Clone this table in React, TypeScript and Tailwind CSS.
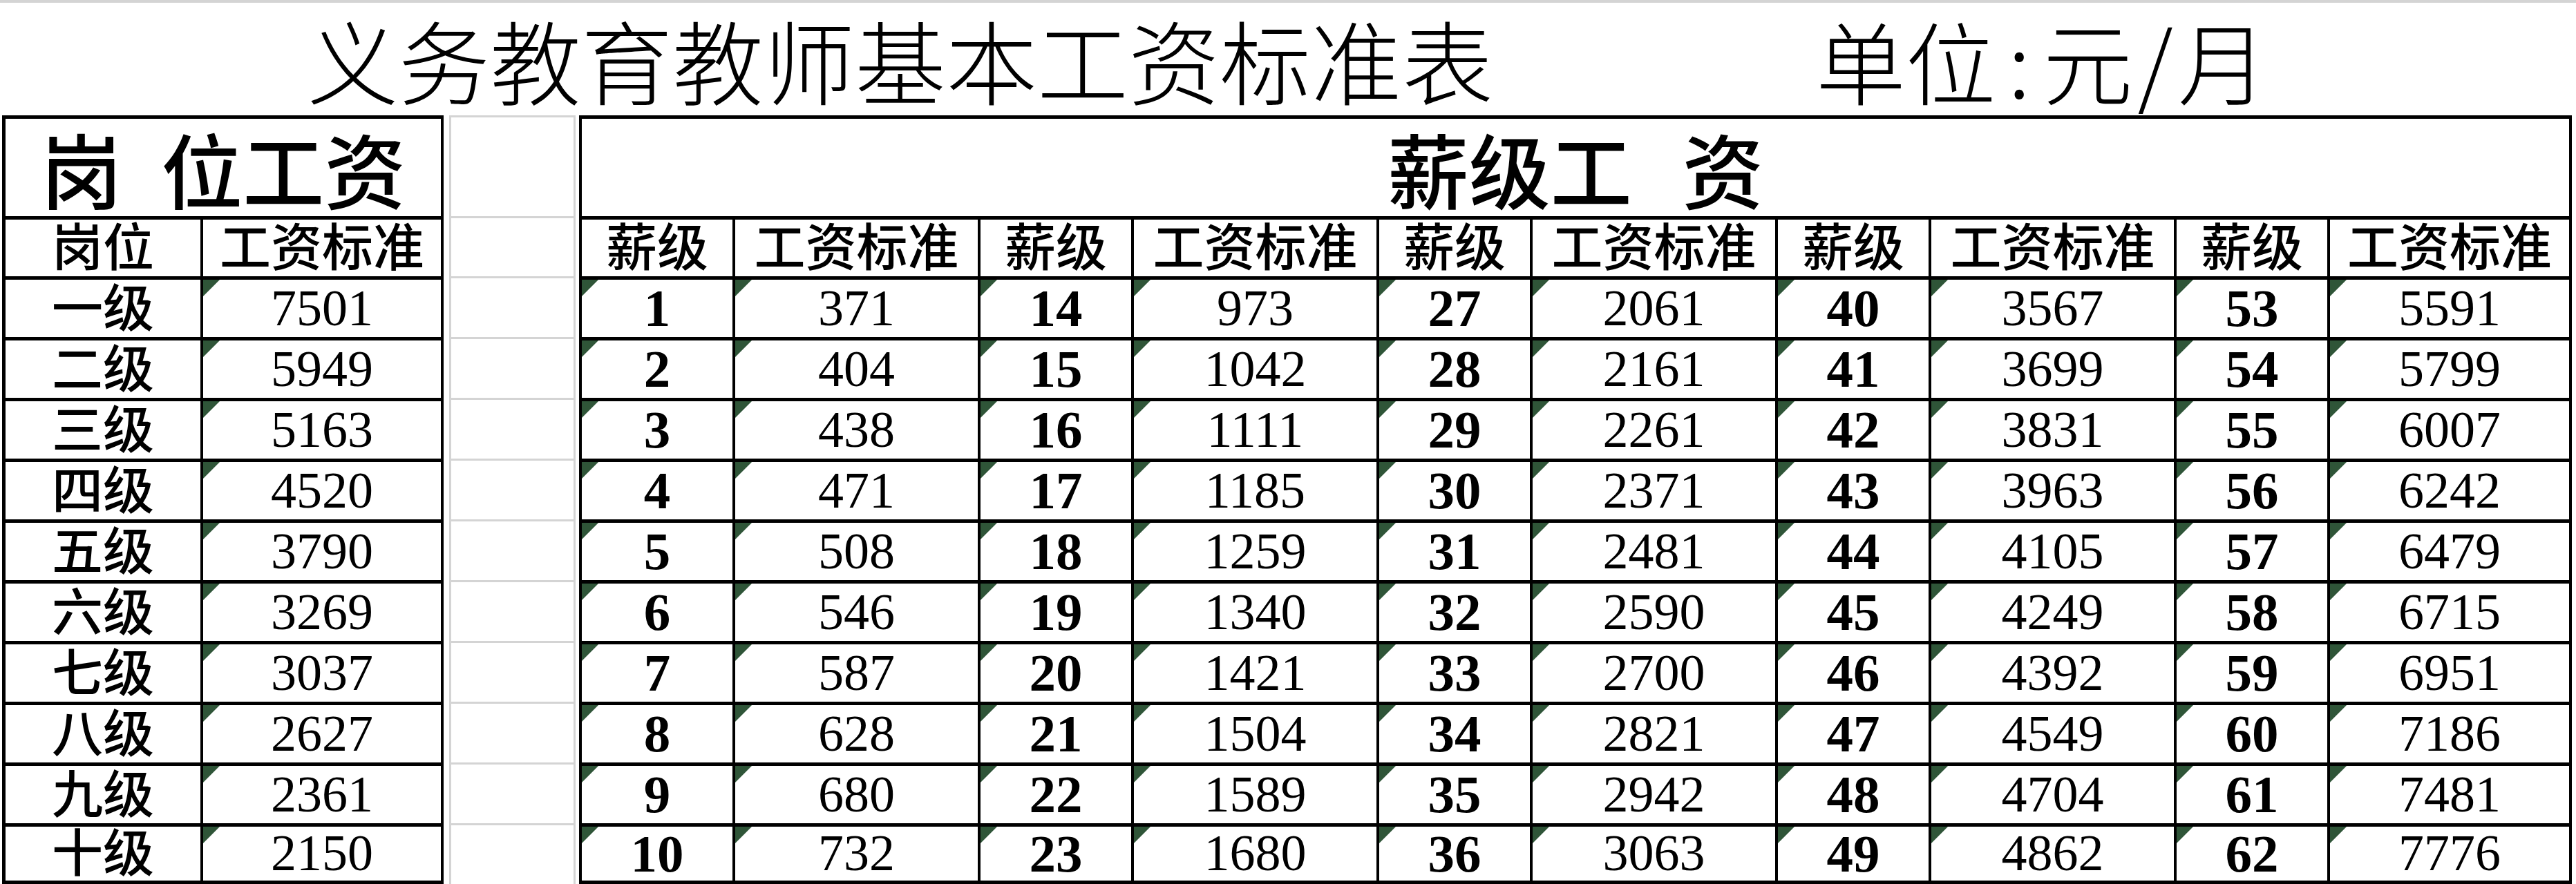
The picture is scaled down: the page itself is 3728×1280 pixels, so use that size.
import React from "react";

const leftRows: [string, string][] = [
  ["一级", "7501"],
  ["二级", "5949"],
  ["三级", "5163"],
  ["四级", "4520"],
  ["五级", "3790"],
  ["六级", "3269"],
  ["七级", "3037"],
  ["八级", "2627"],
  ["九级", "2361"],
  ["十级", "2150"],
];

const groups: [number, number][][] = [
  [[1, 371], [2, 404], [3, 438], [4, 471], [5, 508], [6, 546], [7, 587], [8, 628], [9, 680], [10, 732]],
  [[14, 973], [15, 1042], [16, 1111], [17, 1185], [18, 1259], [19, 1340], [20, 1421], [21, 1504], [22, 1589], [23, 1680]],
  [[27, 2061], [28, 2161], [29, 2261], [30, 2371], [31, 2481], [32, 2590], [33, 2700], [34, 2821], [35, 2942], [36, 3063]],
  [[40, 3567], [41, 3699], [42, 3831], [43, 3963], [44, 4105], [45, 4249], [46, 4392], [47, 4549], [48, 4704], [49, 4862]],
  [[53, 5591], [54, 5799], [55, 6007], [56, 6242], [57, 6479], [58, 6715], [59, 6951], [60, 7186], [61, 7481], [62, 7776]],
];

function Tri() {
  return (
    <div className="absolute left-0 top-0 h-[24px] w-[24px] bg-[#2f5538] [clip-path:polygon(0_0,100%_0,0_100%)]" />
  );
}

function Cell({
  children,
  tri,
  className = "",
}: {
  children?: React.ReactNode;
  tri?: boolean;
  className?: string;
}) {
  return (
    <div
      className={`relative flex min-w-0 items-center justify-center border-t-[5px] border-r-[4px] border-black ${className}`}
    >
      {tri && <Tri />}
      {children}
    </div>
  );
}

function CjkText({ children, className = "" }: { children: React.ReactNode; className?: string }) {
  return (
    <span
      className={`whitespace-nowrap font-['Noto_Sans_CJK_SC',sans-serif] leading-[1.05] ${className}`}
    >
      {children}
    </span>
  );
}

function Num({ children, bold }: { children: React.ReactNode; bold?: boolean }) {
  return (
    <span
      className={
        bold
          ? "whitespace-nowrap font-['Liberation_Serif',serif] text-[77px] font-bold leading-[1.05]"
          : "whitespace-nowrap font-['Liberation_Serif',serif] text-[74px] font-normal leading-[1.05]"
      }
    >
      {children}
    </span>
  );
}

export default function App() {
  const rowsData = Array.from({ length: 10 }, (_, i) => i);
  return (
    <div className="h-[1280px] w-[3728px] overflow-hidden bg-white text-black">
      {/* title line */}
      <div className="flex h-[167px] items-center border-t-[4px] border-[#d4d4d4]">
        <CjkText className="ml-[445px] text-[132px] font-light">义务教育教师基本工资标准表</CjkText>
        <CjkText className="ml-[467px] text-[130px] font-light">
          单位<span className="mx-[18px]">:</span>元<span className="mx-[7px]">/</span>月
        </CjkText>
      </div>

      <div className="flex">
        {/* left table */}
        <div className="ml-[3px] grid grid-cols-[286px_348px] grid-rows-[146px_87px_repeat(9,88px)_83px] border-b-[5px] border-l-[5px] border-black">
          <Cell className="col-span-2">
            <CjkText className="text-[118px] font-medium [word-spacing:30px]">岗 位工资</CjkText>
          </Cell>
          <Cell className="pb-[12px]">
            <CjkText className="text-[74px] font-medium">岗位</CjkText>
          </Cell>
          <Cell className="pb-[12px]">
            <CjkText className="text-[74px] font-medium">工资标准</CjkText>
          </Cell>
          {leftRows.map(([name, val]) => (
            <React.Fragment key={name}>
              <Cell className="pb-[12px]">
                <CjkText className="text-[74px] font-medium">{name}</CjkText>
              </Cell>
              <Cell tri>
                <Num>{val}</Num>
              </Cell>
            </React.Fragment>
          ))}
        </div>

        {/* spacer column with light gridlines */}
        <div className="w-[196px] pl-[8px] pr-[5px]">
          <div className="grid h-[1113px] grid-rows-[146px_87px_repeat(9,88px)_83px] border-x-[3px] border-[#d4d4d4]">
            <div className="border-t-[3px] border-[#d4d4d4]" />
            <div className="border-t-[3px] border-[#d4d4d4]" />
            {rowsData.map((i) => (
              <div key={i} className="border-t-[3px] border-[#d4d4d4]" />
            ))}
          </div>
        </div>

        {/* right table */}
        <div className="grid grid-cols-[repeat(4,222px_355px)_222px_350px] grid-rows-[146px_87px_repeat(9,88px)_83px] border-b-[5px] border-l-[4px] border-black">
          <Cell className="col-span-10">
            <CjkText className="text-[118px] font-medium [word-spacing:46px]">薪级工 资</CjkText>
          </Cell>
          {groups.map((_, g) => (
            <React.Fragment key={`h${g}`}>
              <Cell className="pb-[12px]">
                <CjkText className="text-[74px] font-medium">薪级</CjkText>
              </Cell>
              <Cell className="pb-[12px]">
                <CjkText className="text-[74px] font-medium">工资标准</CjkText>
              </Cell>
            </React.Fragment>
          ))}
          {rowsData.map((r) =>
            groups.map((grp, g) => (
              <React.Fragment key={`r${r}g${g}`}>
                <Cell tri>
                  <Num bold>{grp[r][0]}</Num>
                </Cell>
                <Cell tri>
                  <Num>{grp[r][1]}</Num>
                </Cell>
              </React.Fragment>
            ))
          )}
        </div>
      </div>
    </div>
  );
}
